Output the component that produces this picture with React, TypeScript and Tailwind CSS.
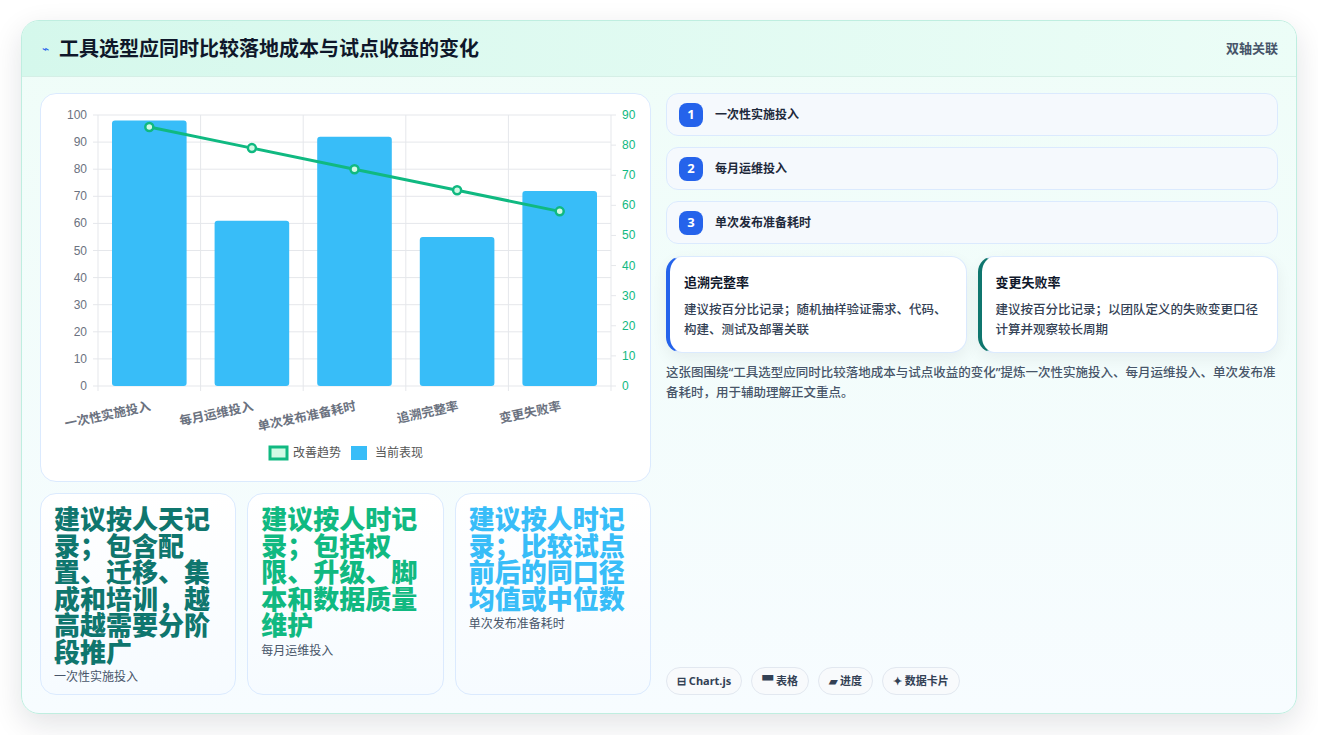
import React from "react";

const bars = [98, 61, 92, 55, 72];
const line = [86, 79, 72, 65, 58];
const labels = ["一次性实施投入", "每月运维投入", "单次发布准备耗时", "追溯完整率", "变更失败率"];

function Chart() {
  const x0 = 57, x1 = 570, yTop = 21, yBot = 292;
  const step = (x1 - x0) / 5;
  const yL = (v: number) => yBot - (v / 100) * (yBot - yTop);
  const yR = (v: number) => yBot - (v / 90) * (yBot - yTop);
  const pts = line.map((v, i) => [x0 + step * (i + 0.5), yR(v)]);
  return (
    <svg width="611" height="388" className="block" style={{ fontFamily: "'Liberation Sans','Noto Sans CJK SC',sans-serif" }}>
      {Array.from({ length: 11 }, (_, i) => (
        <g key={i}>
          <line x1={x0 - 5} x2={x1} y1={yL(i * 10)} y2={yL(i * 10)} stroke="#e5e7eb" />
          <text x={x0 - 11} y={yL(i * 10) + 4} textAnchor="end" fontSize="12" fill="#6b7280">{i * 10}</text>
        </g>
      ))}
      {Array.from({ length: 10 }, (_, i) => (
        <g key={i}>
          <line x1={x1} x2={x1 + 5} y1={yR(i * 10)} y2={yR(i * 10)} stroke="#e5e7eb" />
          <text x={x1 + 11} y={yR(i * 10) + 4} fontSize="12" fill="#10b981">{i * 10}</text>
        </g>
      ))}
      {Array.from({ length: 6 }, (_, i) => (
        <line key={i} x1={x0 + step * i} x2={x0 + step * i} y1={yTop} y2={yBot + 5} stroke="#e5e7eb" />
      ))}
      {bars.map((v, i) => (
        <rect key={i} x={x0 + step * i + 14} y={yL(v)} width={step - 28} height={yBot - yL(v)} rx="3" fill="#38bdf8" />
      ))}
      <polyline points={pts.map((p) => p.join(",")).join(" ")} fill="none" stroke="#10b981" strokeWidth="3" />
      {pts.map((p, i) => (
        <circle key={i} cx={p[0]} cy={p[1]} r="4" fill="#d1fae5" stroke="#10b981" strokeWidth="2.5" />
      ))}
      {labels.map((l, i) => {
        const cx = x0 + step * (i + 0.5) + 2;
        return (
          <text key={i} x={cx} y={316} textAnchor="end" fontSize="12.5" fontWeight="bold" fill="#6b7280" transform={`rotate(-12 ${cx} 316)`}>{l}</text>
        );
      })}
      <rect x="229" y="353" width="17" height="12" fill="#d1fae5" stroke="#10b981" strokeWidth="3" />
      <text x="252" y="363" fontSize="12" fill="#555">改善趋势</text>
      <rect x="310" y="352" width="16" height="14" fill="#38bdf8" />
      <text x="334" y="363" fontSize="12" fill="#555">当前表现</text>
    </svg>
  );
}

function Stat({ big, small, color }: { big: string; small: string; color: string }) {
  return (
    <div className="rounded-2xl border border-[#dbeafe] bg-gradient-to-b from-white to-[#f6fbff] px-[13px] pt-[12px] pb-2 flex flex-col">
      <div className={`text-[26px] leading-[26.5px] font-extrabold ${color}`}>{big}</div>
      <div className="text-xs text-[#475569] mt-[4px]">{small}</div>
    </div>
  );
}

export default function App() {
  return (
    <div className="w-[1318px] h-[735px] bg-white pt-[20px] pl-[21px]" style={{ fontFamily: "'Noto Sans','Noto Sans CJK SC',sans-serif" }}>
      <div className="w-[1276px] h-[694px] rounded-[18px] border border-[#bfeee0] bg-gradient-to-b from-[#effdf8] to-[#f7fcff] shadow-[0_10px_30px_rgba(15,23,42,0.12)] overflow-hidden flex flex-col">
        <div className="h-[56px] shrink-0 bg-gradient-to-r from-[#d5f8ec] to-[#ecfdf7] border-b border-[#d5efe6] flex items-center px-[20px]">
          <span className="text-[#2563eb] text-[12px] mr-[10px]">⌁</span>
          <span className="text-[20px] font-bold text-[#0f172a]">工具选型应同时比较落地成本与试点收益的变化</span>
          <span className="ml-auto text-[13px] font-semibold text-[#475569] mr-[-2px]">双轴关联</span>
        </div>
        <div className="flex gap-[15px] px-[18px] pt-[16px] pb-[18px] flex-1">
          <div className="w-[611px] flex flex-col gap-[11px]">
            <div className="h-[389px] rounded-2xl border border-[#dbeafe] bg-white overflow-hidden">
              <Chart />
            </div>
            <div className="grid grid-cols-3 gap-[11px] flex-1">
              <Stat big="建议按人天记录；包含配置、迁移、集成和培训，越高越需要分阶段推广" small="一次性实施投入" color="text-[#0f766e]" />
              <Stat big="建议按人时记录；包括权限、升级、脚本和数据质量维护" small="每月运维投入" color="text-[#10b981]" />
              <Stat big="建议按人时记录；比较试点前后的同口径均值或中位数" small="单次发布准备耗时" color="text-[#38bdf8]" />
            </div>
          </div>
          <div className="w-[612px] flex flex-col">
            {["一次性实施投入", "每月运维投入", "单次发布准备耗时"].map((t, i) => (
              <div key={i} className="h-[43px] mb-[11px] rounded-xl border border-[#dbeafe] bg-[#f5f9fd] flex items-center px-[12px]">
                <span className="w-[24px] h-[24px] rounded-lg bg-[#2563eb] text-white text-[13px] font-bold flex items-center justify-center">{i + 1}</span>
                <span className="ml-[12px] text-[12px] font-semibold text-[#1e293b]">{t}</span>
              </div>
            ))}
            <div className="grid grid-cols-2 gap-[11px] mt-[1px]">
              {[
                ["追溯完整率", "建议按百分比记录；随机抽样验证需求、代码、构建、测试及部署关联", "border-l-[#2563eb]"],
                ["变更失败率", "建议按百分比记录；以团队定义的失败变更口径计算并观察较长周期", "border-l-[#0f766e]"],
              ].map(([h, b, c], i) => (
                <div key={i} className={`h-[97px] rounded-2xl border border-[#dbeafe] border-l-4 ${c} bg-white shadow-[0_6px_16px_rgba(15,23,42,0.06)] pl-[14px] pr-[18px] pt-[16px]`}>
                  <div className="text-[13px] font-bold text-[#0f172a]">{h}</div>
                  <div className="text-[12.5px] leading-[20px] text-[#334155] mt-[7px] font-medium">{b}</div>
                </div>
              ))}
            </div>
            <div className="text-[12.5px] leading-[20px] text-[#475569] mt-[10px] font-medium">这张图围绕“工具选型应同时比较落地成本与试点收益的变化”提炼一次性实施投入、每月运维投入、单次发布准备耗时，用于辅助理解正文重点。</div>
            <div className="mt-auto flex gap-[9px]">
              {["⊟ Chart.js", "▀ 表格", "▰ 进度", "✦ 数据卡片"].map((t) => (
                <span key={t} className="h-[28px] px-[10px] rounded-full border border-[#e2e8f0] bg-[#f8fafc] text-[11px] font-bold text-[#334155] flex items-center">{t}</span>
              ))}
            </div>
          </div>
        </div>
      </div>
    </div>
  );
}
